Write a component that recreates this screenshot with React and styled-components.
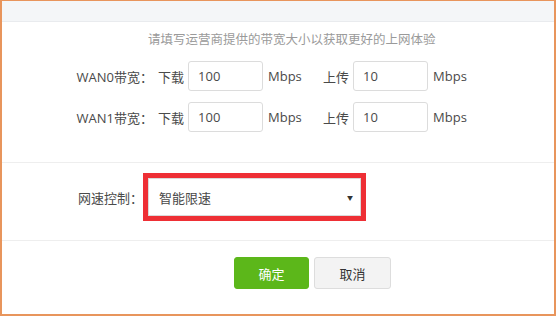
import styled, { createGlobalStyle } from 'styled-components'

const GlobalStyle = createGlobalStyle`
    html, body {
        margin: 0;
        padding: 0;
        background: #fff;
    }
    body {
        font-family: "Open Sans", "Noto Sans CJK SC", sans-serif;
        color: #4a4a4a;
    }
`

const rows = [
    { name: 'WAN0带宽：', down: '100', up: '10' },
    { name: 'WAN1带宽：', down: '100', up: '10' },
]

const App = () => {
    return (
        <>
            <GlobalStyle />
            <Frame>
                <TopBand />
                <Section>
                    <Hint>请填写运营商提供的带宽大小以获取更好的上网体验</Hint>
                    {rows.map((r) => (
                        <Row key={r.name}>
                            <Label>{r.name}</Label>
                            <Word>下载</Word>
                            <Field defaultValue={r.down} />
                            <Unit>Mbps</Unit>
                            <Word>上传</Word>
                            <Field defaultValue={r.up} />
                            <Unit>Mbps</Unit>
                        </Row>
                    ))}
                </Section>
                <Divider />
                <SelectRow>
                    <SelectLabel>网速控制：</SelectLabel>
                    <Highlight>
                        <Select>
                            <span>智能限速</span>
                            <Arrow>▼</Arrow>
                        </Select>
                    </Highlight>
                </SelectRow>
                <Divider $top={19} />
                <Buttons>
                    <Button $primary>确定</Button>
                    <Button>取消</Button>
                </Buttons>
            </Frame>
        </>
    )
}

export default App

const Frame = styled.div`
    width: 556px;
    height: 316px;
    box-sizing: border-box;
    border: 2px solid #e8955c;
    border-top-width: 1px;
    background: #fff;
    display: flex;
    flex-direction: column;
    overflow: hidden;
`

const TopBand = styled.div`
    height: 20px;
    background: #f4f6f8;
    border-bottom: 1px solid #e9ebee;
`

const Section = styled.div`
    display: flex;
    flex-direction: column;
    padding-top: 9px;
    gap: 11px;
`

const Hint = styled.div`
    padding-left: 146px;
    font-size: 12.5px;
    line-height: 18px;
    color: #9a9a9a;
    margin-bottom: 1px;
`

const Row = styled.div`
    display: flex;
    align-items: center;
    height: 30px;
    font-size: 13px;
`

const Label = styled.span`
    width: 151px;
    text-align: right;
    font-size: 13px;
`

const Word = styled.span`
    margin-left: 5px;
    margin-right: 4px;
    font-size: 13px;
`

const Field = styled.input`
    width: 75px;
    height: 30px;
    box-sizing: border-box;
    border: 1px solid #dcdcdc;
    border-radius: 3px;
    padding: 0 9px;
    font-family: inherit;
    font-size: 13px;
    color: #4a4a4a;
    outline: none;
`

const Unit = styled.span`
    width: 50px;
    margin-left: 5px;
    font-size: 13px;
`

const Divider = styled.div`
    height: 1px;
    background: #eeeeee;
    margin-top: ${(p) => p.$top ?? 30}px;
`

const SelectRow = styled.div`
    display: flex;
    align-items: center;
    margin-top: 10px;
`

const SelectLabel = styled.span`
    width: 141px;
    text-align: right;
    font-size: 13px;
`

const Highlight = styled.div`
    border: 5px solid #ee2f35;
`

const Select = styled.div`
    width: 213px;
    height: 38px;
    box-sizing: border-box;
    border: 1px solid #dadada;
    background: #fff;
    display: flex;
    align-items: center;
    justify-content: space-between;
    padding: 0 7px 0 10px;
    font-size: 13px;
`

const Arrow = styled.span`
    font-size: 6px;
    color: #333;
`

const Buttons = styled.div`
    display: flex;
    gap: 5px;
    padding-left: 232px;
    margin-top: 16px;
`

const Button = styled.button`
    width: ${(p) => (p.$primary ? 75 : 77)}px;
    height: 32px;
    box-sizing: border-box;
    border-radius: 3px;
    border: 1px solid ${(p) => (p.$primary ? '#5cb71a' : '#dddddd')};
    background: ${(p) => (p.$primary ? '#5cb71a' : '#f3f3f3')};
    color: ${(p) => (p.$primary ? '#fff' : '#333')};
    font-family: inherit;
    font-size: 13px;
    padding: 0;
`
